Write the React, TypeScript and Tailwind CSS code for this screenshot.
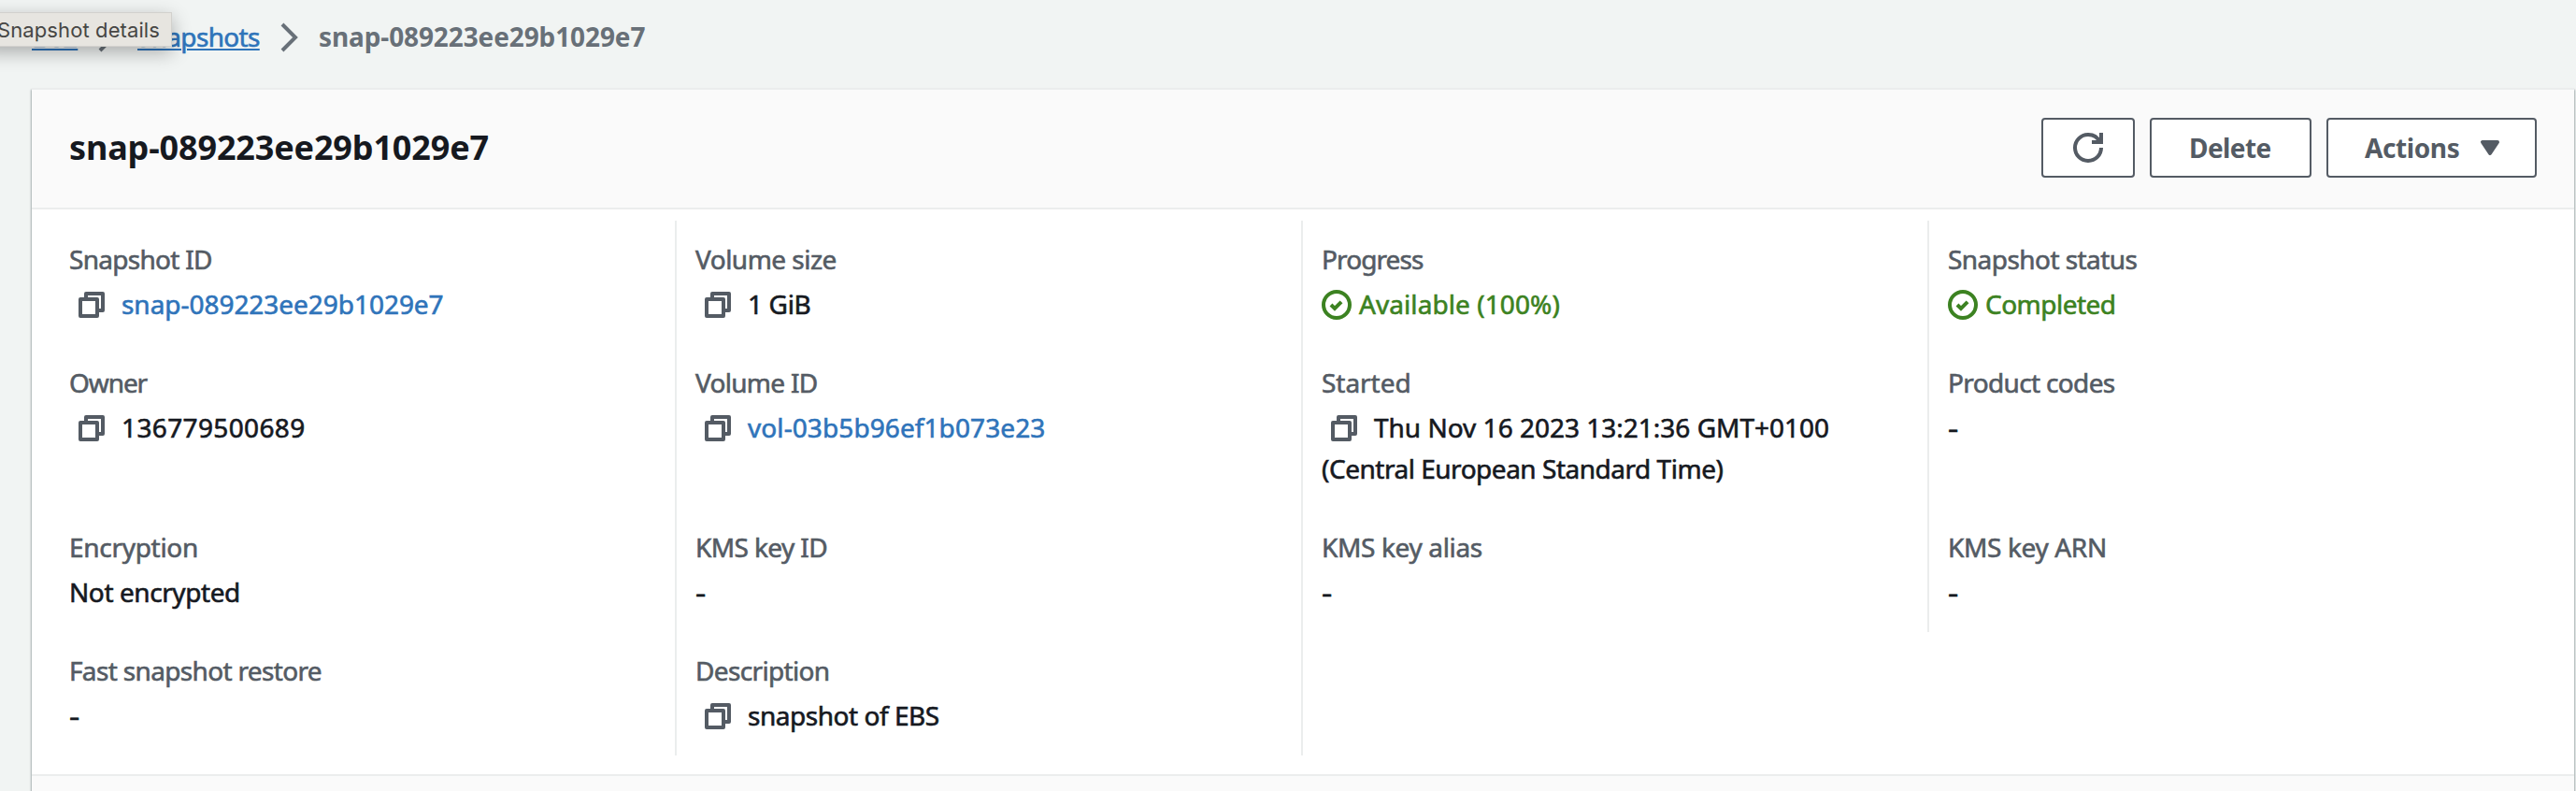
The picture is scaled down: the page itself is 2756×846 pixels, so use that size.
import React from "react";

type Kind = "plain" | "link" | "copy" | "status";

interface Field {
  label: string;
  labelTracking: string;
  value: string;
  kind: Kind;
  tracking?: string;
  secondLine?: string;
}

const rows: (Field | null)[][] = [
  [
    { label: "Snapshot ID", labelTracking: "tracking-[-0.72px]", value: "snap-089223ee29b1029e7", kind: "link", tracking: "tracking-[-0.04px]" },
    { label: "Volume size", labelTracking: "tracking-[-0.52px]", value: "1 GiB", kind: "copy", tracking: "tracking-[-0.35px]" },
    { label: "Progress", labelTracking: "tracking-[-0.9px]", value: "Available (100%)", kind: "status", tracking: "tracking-[0.08px]" },
    { label: "Snapshot status", labelTracking: "tracking-[-0.55px]", value: "Completed", kind: "status", tracking: "tracking-[-0.52px]" },
  ],
  [
    { label: "Owner", labelTracking: "tracking-[-1.1px]", value: "136779500689", kind: "copy", tracking: "tracking-[0.36px]" },
    { label: "Volume ID", labelTracking: "tracking-[-0.72px]", value: "vol-03b5b96ef1b073e23", kind: "link", tracking: "tracking-[0.09px]" },
    {
      label: "Started",
      labelTracking: "tracking-[-0.04px]",
      value: "Thu Nov 16 2023 13:21:36 GMT+0100",
      kind: "copy",
      secondLine: "(Central European Standard Time)",
    },
    { label: "Product codes", labelTracking: "tracking-[-0.65px]", value: "-", kind: "plain" },
  ],
  [
    { label: "Encryption", labelTracking: "tracking-[-0.3px]", value: "Not encrypted", kind: "plain", tracking: "tracking-[-0.42px]" },
    { label: "KMS key ID", labelTracking: "tracking-[-0.6px]", value: "-", kind: "plain" },
    { label: "KMS key alias", labelTracking: "tracking-[-0.35px]", value: "-", kind: "plain" },
    { label: "KMS key ARN", labelTracking: "tracking-[-0.35px]", value: "-", kind: "plain" },
  ],
  [
    { label: "Fast snapshot restore", labelTracking: "tracking-[-0.66px]", value: "-", kind: "plain" },
    { label: "Description", labelTracking: "tracking-[-0.65px]", value: "snapshot of EBS", kind: "copy", tracking: "tracking-[-0.47px]" },
    null,
  ],
];

function CopyIcon() {
  return (
    <svg viewBox="0 0 16 16" className="mt-[7px] mr-4 ml-2 size-8 shrink-0 fill-none stroke-[#545b64] stroke-2" strokeLinejoin="round">
      <path d="M2 5h9v9H2z" />
      <path d="M5 5V2h9v9h-3" />
    </svg>
  );
}

function StatusIcon() {
  return (
    <svg viewBox="0 0 16 16" className="mt-[7px] mr-2 size-8 shrink-0 fill-none stroke-[#3c8221] stroke-2">
      <circle cx="8" cy="8" r="7" />
      <path d="m5 8 2 2 3.52-3.52" />
    </svg>
  );
}

function Chevron() {
  return (
    <svg viewBox="0 0 16 16" className="mt-[7px] size-8 shrink-0 fill-none stroke-[#687078] stroke-2">
      <path d="m4 1 7 7-7 7" />
    </svg>
  );
}

const valueColor: Record<Kind, string> = {
  plain: "text-[#16191f]",
  copy: "text-[#16191f]",
  link: "text-[#2f74ba]",
  status: "text-[#3c8221]",
};

function Cell({ field, first }: { field: Field; first: boolean }) {
  return (
    <div className={`border-l-2 pt-[19px] pb-[21px] pl-5 ${first ? "border-transparent" : "border-[#ebeded]"}`}>
      <div className={`text-[#545b64] ${field.labelTracking}`}>{field.label}</div>
      <div className={`mt-1 flex whitespace-nowrap ${valueColor[field.kind]}`}>
        {(field.kind === "copy" || field.kind === "link") && <CopyIcon />}
        {field.kind === "status" && <StatusIcon />}
        {field.value === "-" ? (
          <span className="origin-left scale-x-125">-</span>
        ) : (
          <span className={field.tracking}>{field.value}</span>
        )}
      </div>
      {field.secondLine && <div className="tracking-[-0.48px] text-[#16191f]">{field.secondLine}</div>}
    </div>
  );
}

export default function App() {
  return (
    <div className="relative flex h-[846px] w-[2756px] flex-col overflow-hidden bg-[#f1f4f3] font-['Noto_Sans',sans-serif] text-[28px] leading-[44px] [-webkit-text-stroke:0.6px]">
      <nav className="flex h-[94px] shrink-0 gap-4 pt-[17px] pl-[34px] whitespace-nowrap">
        <a className="w-[49px] text-[#2f74ba] underline decoration-2 underline-offset-2">EC2</a>
        <Chevron />
        <a className="w-[131px] tracking-[-0.67px] text-[#2f74ba] underline decoration-2 underline-offset-2">Snapshots</a>
        <Chevron />
        <span className="-ml-px font-bold tracking-[-0.11px] text-[#687078] [-webkit-text-stroke:0]">snap-089223ee29b1029e7</span>
      </nav>

      <main className="mr-0.5 ml-[34px] flex grow flex-col border-t-2 border-[#ebeded] bg-white shadow-[-1px_2px_2px_rgba(0,28,36,0.2),1px_2px_2px_rgba(0,28,36,0.2),0_2px_2px_rgba(0,28,36,0.3)]">
        <header className="flex h-32 shrink-0 items-start justify-between border-b-2 border-[#ebeded] bg-[#fafafa] pr-10 pl-10">
          <h1 className="pt-10 text-[36px] font-bold tracking-[-0.15px] text-[#16191f] [-webkit-text-stroke:0]">snap-089223ee29b1029e7</h1>
          <div className="flex gap-4 pt-[30px] font-bold text-[#545b64] [-webkit-text-stroke:0]">
            <button className="flex h-16 w-[100px] items-center justify-center rounded-[4px] border-2 border-[#545b64] bg-white">
              <svg viewBox="0 0 16 16" className="size-8 fill-none stroke-[#545b64] stroke-2">
                <path d="M10 5h5V0" />
                <path d="M15 8a6.957 6.957 0 0 1-7 7 6.957 6.957 0 0 1-7-7 6.957 6.957 0 0 1 7-7 6.87 6.87 0 0 1 6.3 4" />
              </svg>
            </button>
            <button className="h-16 w-[173px] rounded-[4px] border-2 border-[#545b64] bg-white pb-px pl-10 text-left tracking-[-0.58px]">Delete</button>
            <button className="flex h-16 w-[225px] items-center rounded-[4px] border-2 border-[#545b64] bg-white pl-[39px]">
              <span className="w-[118px] pb-px text-left tracking-[-0.4px]">Actions</span>
              <svg viewBox="0 0 16 16" className="size-8 shrink-0 fill-[#545b64] stroke-[#545b64] stroke-2" strokeLinejoin="round">
                <path d="M4 5h8l-4 6-4-6z" />
              </svg>
            </button>
          </div>
        </header>

        <section className="flex h-[604px] shrink-0 flex-col pt-3 pl-[18px]">
          {rows.map((row, r) => (
            <div key={r} className="grid grid-cols-[670px_670px_670px_670px]">
              {row.map((field, c) =>
                field ? <Cell key={c} field={field} first={c === 0} /> : <div key={c} className="border-l-2 border-[#ebeded]" />
              )}
            </div>
          ))}
        </section>

        <footer className="grow border-t-2 border-[#ebeded] bg-[#fafafa]" />
      </main>

      <div className="absolute top-[13px] -left-5 flex h-[37px] w-[204px] items-center justify-end border border-[#d2d1cd] bg-[#e7e5e0] pr-3 font-['Inter',sans-serif] text-[22px] leading-[30px] tracking-[0.1px] whitespace-nowrap text-[#464644] shadow-[0_6px_20px_rgba(0,0,0,0.3)] [-webkit-text-stroke:0]">
        Snapshot details
      </div>
    </div>
  );
}
